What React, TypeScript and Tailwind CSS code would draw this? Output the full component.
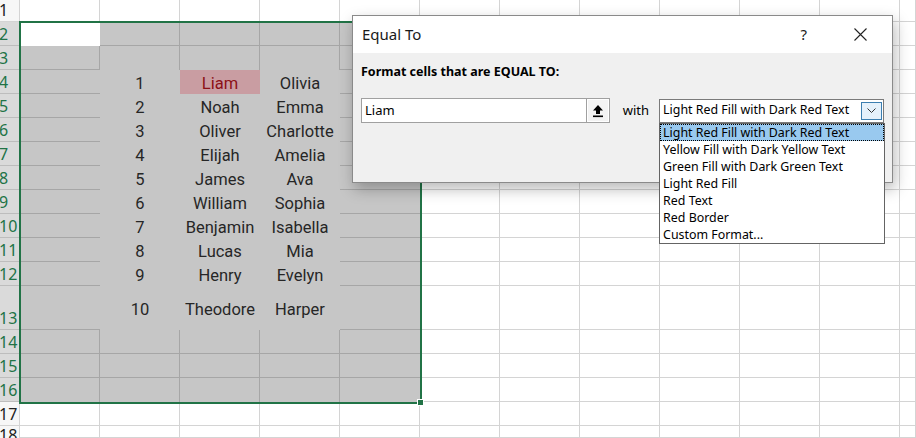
import React from "react";

const ROWS = 18;
const COLS = 13; // 0 = header, 1..11 columns B.., 12 = partial

const nums: Record<number, [string, string, string]> = {
  4: ["1", "Liam", "Olivia"],
  5: ["2", "Noah", "Emma"],
  6: ["3", "Oliver", "Charlotte"],
  7: ["4", "Elijah", "Amelia"],
  8: ["5", "James", "Ava"],
  9: ["6", "William", "Sophia"],
  10: ["7", "Benjamin", "Isabella"],
  11: ["8", "Lucas", "Mia"],
  12: ["9", "Henry", "Evelyn"],
  13: ["10", "Theodore", "Harper"],
};

const OUT = "border-r border-b border-[#d4d4d4] bg-white";
const IN_RB = "border-r border-b border-[#a6a6a6] bg-[#c6c6c6]";
const IN_R = "border-r border-[#a6a6a6] bg-[#c6c6c6]";
const IN_B = "border-b border-[#a6a6a6] bg-[#c6c6c6]";
const IN_NONE = "bg-[#c6c6c6]";

function cellClass(r: number, c: number): string {
  const inside = r >= 2 && r <= 16 && c >= 1 && c <= 5;
  if (!inside) return OUT;
  if (r === 2 && c === 1) return "bg-white";
  const right = c <= 4 && (r <= 3 || r >= 14);
  let bottom = false;
  if (r !== 16) {
    if (c === 1 || c === 5) bottom = true;
    else bottom = r === 2 || r >= 14;
  }
  if (right && bottom) return IN_RB;
  if (right) return IN_R;
  if (bottom) return IN_B;
  return IN_NONE;
}

function HeaderCell({ r }: { r: number }) {
  const sel = r >= 2 && r <= 16;
  const last = r === ROWS;
  return (
    <div
      className={
        sel
          ? "flex items-end overflow-hidden border-r border-b border-[#bdbdbd] bg-[#dadada] text-[#217346]"
          : last
          ? "flex items-start overflow-hidden border-r border-[#d4d4d4] bg-[#f7f7f7] pt-[1px] text-[#222222]"
          : "flex items-end overflow-hidden border-r border-b border-[#d4d4d4] bg-[#f7f7f7] text-[#222222]"
      }
    >
      <span
        className={
          last
            ? "-ml-[1px] whitespace-nowrap text-[16px] leading-[16px] font-['Noto_Sans',sans-serif]"
            : "-ml-[1px] whitespace-nowrap text-[16px] leading-[22px] font-['Noto_Sans',sans-serif]"
        }
      >
        {r}
      </span>
    </div>
  );
}

function Cell({ r, c }: { r: number; c: number }) {
  const data = nums[r];
  let text: string | null = null;
  if (data && c >= 2 && c <= 4) text = data[c - 2];
  const isLiam = r === 4 && c === 3;
  return (
    <div
      className={
        isLiam
          ? "flex items-center justify-center bg-[#c99da2] pt-[4px]"
          : "flex items-center justify-center pt-[4px] " + cellClass(r, c)
      }
    >
      {text && (
        <span
          className={
            isLiam
              ? "whitespace-nowrap text-[16.5px] leading-[20px] text-[#8c1016] font-['Roboto',sans-serif]"
              : "whitespace-nowrap text-[16.5px] leading-[20px] text-[#262626] font-['Roboto',sans-serif]"
          }
        >
          {text}
        </span>
      )}
    </div>
  );
}

function UploadIcon() {
  return (
    <svg width="12" height="14" viewBox="0 0 12 14">
      <polygon points="6,1 11,6.5 8,6.5 8,10 4,10 4,6.5 1,6.5" fill="#000" />
      <rect x="1" y="11.5" width="10" height="1.6" fill="#000" />
    </svg>
  );
}

const items = [
  "Light Red Fill with Dark Red Text",
  "Yellow Fill with Dark Yellow Text",
  "Green Fill with Dark Green Text",
  "Light Red Fill",
  "Red Text",
  "Red Border",
  "Custom Format...",
];

function Dialog() {
  return (
    <div className="absolute left-[352px] top-[15px] flex h-[168px] w-[541px] flex-col border border-[#8a8a8a] bg-[#f0f0f0] shadow-[2px_6px_14px_rgba(0,0,0,0.28)] font-['Noto_Sans',sans-serif]">
      <div className="flex h-[37px] items-center bg-white pl-[9px]">
        <span className="text-[15px] text-[#1a1a1a]">Equal To</span>
        <span className="ml-auto mr-[47px] text-[15px] text-[#1a1a1a]">?</span>
        <svg className="mr-[25px]" width="13" height="13" viewBox="0 0 13 13">
          <path d="M0.5 0.5 L12.5 12.5 M12.5 0.5 L0.5 12.5" stroke="#222" strokeWidth="1.1" />
        </svg>
      </div>
      <div className="flex flex-col px-[8px] pt-[10px]">
        <div className="text-[12.5px] font-bold leading-[17px] text-black">
          Format cells that are EQUAL TO:
        </div>
        <div className="mt-[18px] flex items-center">
          <div className="flex h-[25px] w-[250px] items-center border border-[#a0a0a0] bg-white">
            <span className="pl-[3px] text-[13px] text-black">Liam</span>
            <div className="ml-auto flex h-[23px] w-[23px] items-center justify-center border-l border-[#a0a0a0] bg-[#f3f3f3] shadow-[inset_0_0_0_1px_#ffffff]">
              <UploadIcon />
            </div>
          </div>
          <span className="ml-[13px] text-[13px] text-black">with</span>
          <div className="relative ml-[10px] flex h-[24px] w-[226px] items-center border border-[#7a7a7a] bg-white">
            <span className="pl-[3px] text-[12.4px] text-black">Light Red Fill with Dark Red Text</span>
            <div className="ml-auto mr-[1px] flex h-[18px] w-[21px] items-center justify-center border border-[#3c7fb1] bg-[#e5f1fb]">
              <svg width="9" height="5" viewBox="0 0 9 5">
                <path d="M0.5 0.5 L4.5 4.5 L8.5 0.5" fill="none" stroke="#333" strokeWidth="1" />
              </svg>
            </div>
            <div className="absolute left-[-1px] top-[23px] flex w-[226px] flex-col border border-[#646464] bg-white">
              {items.map((it, i) => (
                <div
                  key={it}
                  className={
                    i === 0
                      ? "h-[17px] whitespace-nowrap border border-dotted border-black bg-[#99c9ef] pl-[2px] text-[12.4px] leading-[15px] text-black"
                      : "h-[17px] whitespace-nowrap pl-[3px] text-[12.4px] leading-[17px] text-black"
                  }
                >
                  {it}
                </div>
              ))}
            </div>
          </div>
        </div>
      </div>
    </div>
  );
}

export default function App() {
  const cells: React.ReactNode[] = [];
  for (let r = 1; r <= ROWS; r++) {
    for (let c = 0; c < COLS; c++) {
      if (c === 0) cells.push(<HeaderCell key={`${r}-${c}`} r={r} />);
      else cells.push(<Cell key={`${r}-${c}`} r={r} c={c} />);
    }
  }
  return (
    <div className="relative h-[438px] w-[916px] overflow-hidden bg-white">
      <div className="grid h-[438px] w-[916px] grid-cols-[20px_repeat(11,80px)_16px] grid-rows-[22px_repeat(11,24px)_44px_repeat(4,24px)_12px]">
        {cells}
      </div>
      <div className="pointer-events-none absolute left-[19px] top-[21px] h-[383px] w-[403px] border-2 border-[#217346]" />
      <div className="absolute left-[417px] top-[399px] h-[7px] w-[7px] border border-white bg-[#217346]" />
      <Dialog />
    </div>
  );
}
